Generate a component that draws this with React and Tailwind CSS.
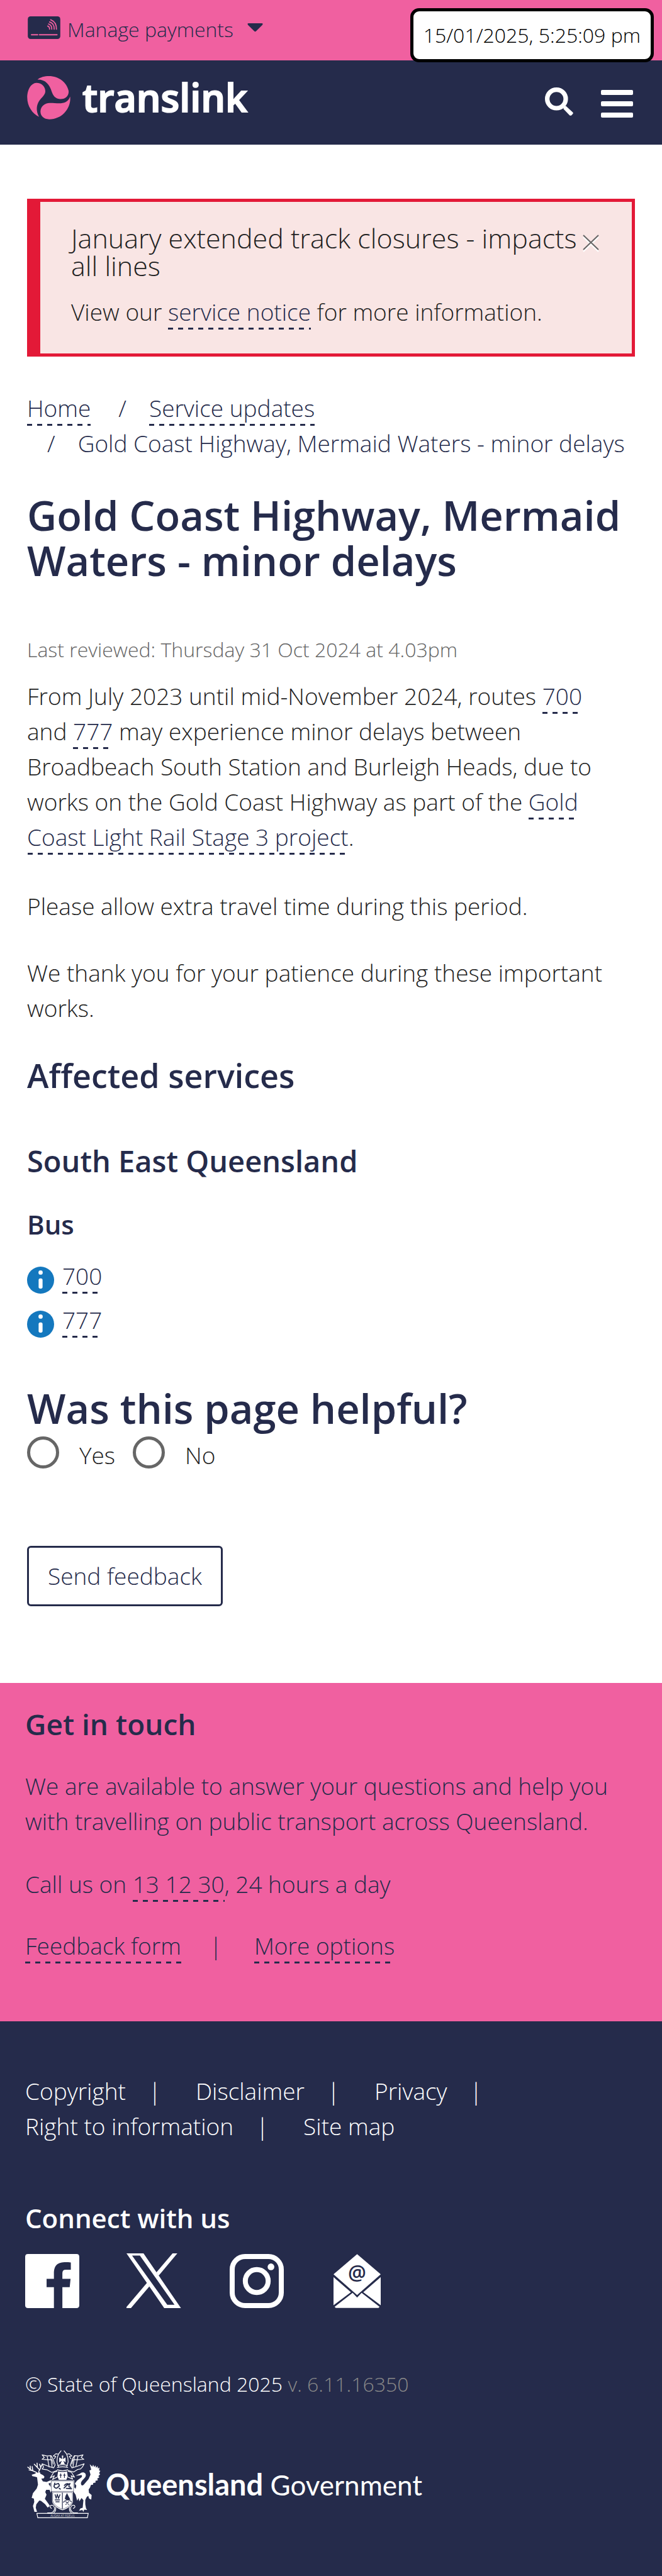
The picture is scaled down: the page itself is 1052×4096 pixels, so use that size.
import React from "react";

const LINK =
  "text-[#252b4b] pb-[3px] bg-no-repeat bg-bottom bg-[length:100%_3px] bg-[image:repeating-linear-gradient(90deg,#252b4b_0_8px,transparent_8px_16px)]";

function DashedLink({ children }) {
  return (
    <a href="#" className={LINK}>
      {children}
    </a>
  );
}

function CardIcon() {
  return (
    <svg viewBox="59 57 175 122" className="h-9 w-[52px]" aria-hidden="true">
      <rect x="59" y="57" width="175" height="122" rx="15" fill="#252b4b" />
      <g fill="none" stroke="#f060a0" strokeWidth="6" strokeLinecap="round">
        <path d="M182 75C204 84 214 102 213 126" />
        <path d="M176 87C192 92 202 107 201 126" />
        <path d="M171 98C182 102 189 112 188 126" />
        <path d="M166 109C173 112 177 118 176 126" />
        <path d="M79 156H112M122 156H216" strokeWidth="7" />
      </g>
    </svg>
  );
}

function SwirlLogo() {
  return (
    <svg viewBox="53 380 233 233" className="h-[69px] w-[69px]" aria-hidden="true">
      <g fill="#f060a0">
        <path d="M108 399C124 386 147 380 170 380C224 380 267 415 276 459C279 487 257 505 229 503C203 500 193 484 186 465C173 425 152 398 108 399Z" />
        <path d="M103 416C132 416 151 437 151 461C151 482 131 494 118 513C104 535 99 563 117 599C81 582 54 541 54 496C54 450 76 417 103 416Z" />
        <path d="M284 490C291 548 244 612 172 612C142 611 124 594 125 568C127 542 147 525 175 524C213 523 267 541 284 490Z" />
      </g>
    </svg>
  );
}

function SearchIcon() {
  return (
    <svg viewBox="751 462 150 150" className="h-[45px] w-[45px]" aria-hidden="true">
      <circle cx="812" cy="523" r="49" fill="none" stroke="#fff" strokeWidth="24" />
      <path d="M848 562L862 560L898 594Q902 598 898 603L891 610Q886 613 882 610L850 577Z" fill="#fff" />
    </svg>
  );
}

function InfoIcon() {
  return (
    <svg viewBox="0 0 48 48" className="h-[43px] w-[43px]" aria-hidden="true">
      <circle cx="24" cy="24" r="24" fill="#1478be" />
      <circle cx="24" cy="10.500" r="3.800" fill="#fff" />
      <rect x="20.500" y="21" width="7" height="18" rx="3" fill="#fff" />
    </svg>
  );
}

function FacebookIcon() {
  return (
    <svg viewBox="0 0 96 96" className="h-[86px] w-[86px]" aria-hidden="true">
      <path
        fill="#fff"
        d="M5 0H91Q96 0 96 5V91Q96 96 91 96H66V59H79L80.500 44H66V34Q66 28 72 28H81V15C60 13 51 17 51 35V44H38V59H51V96H5Q0 96 0 91V5Q0 0 5 0Z"
      />
    </svg>
  );
}

function XIcon() {
  return (
    <svg viewBox="0 0 98 98" className="h-[87px] w-[87px]" aria-hidden="true">
      <g fill="#fff">
        <path fillRule="evenodd" d="M0 0H30.500L97.500 98H67.500ZM10 4L73 92H86L24 4Z" />
        <path d="M82.500 0H91L57.500 40L53.500 34Z" />
        <path d="M0 98V96L37 52.500L41 59L8 98Z" />
      </g>
    </svg>
  );
}

function InstagramIcon() {
  return (
    <svg viewBox="0 0 97 97" className="h-[86px] w-[86px]" aria-hidden="true">
      <rect x="4.500" y="4.500" width="88" height="88" rx="23" fill="none" stroke="#fff" strokeWidth="9" />
      <circle cx="48.500" cy="48.500" r="20.500" fill="none" stroke="#fff" strokeWidth="9" />
      <circle cx="74" cy="23" r="6" fill="#fff" />
    </svg>
  );
}

function MailIcon() {
  return (
    <svg viewBox="0 0 84 96" className="h-[86px] w-[75px]" aria-hidden="true">
      <g fill="#fff">
        <path d="M42 0L84 36L42 73L0 36Z" />
        <path d="M0 41L31 68L0 91Z" />
        <path d="M84 41L53 68L84 91Z" />
        <path d="M34 69L42 77.500L50 69L82 94L80 96H4L2 94Z" />
      </g>
      <text x="42" y="46" textAnchor="middle" fontSize="36" fontWeight="600" fontFamily="Open Sans, sans-serif" fill="#252b4b">
        @
      </text>
    </svg>
  );
}

function CoatOfArms() {
  return (
    <svg viewBox="55 77 392 365" className="h-[108px] w-[117px]" aria-hidden="true">
      {/* stag */}
      <path
        fill="#fff"
        d="M78 209L97 203L104 196L112 199L123 195L124 203L141 212L147 220L143 228L130 230L138 244L158 248L180 238L183 250L168 257L184 280L181 306L174 290L156 290L151 302L158 316L149 338L168 364L176 376L164 385L150 367L128 349L119 347L103 368L100 386L107 408H93L85 377L92 355L90 337L78 333L85 308L105 283L112 262L107 222L95 219L82 216Z"
      />
      <g fill="none" stroke="#fff" strokeWidth="5" strokeLinecap="round" strokeLinejoin="round">
        <path d="M108 200C98 188 82 192 72 180L57 168M72 180L70 162M84 187L81 165M86 188L64 183" />
        <path d="M116 198C114 182 128 182 126 166L120 152M120 182L104 165L92 152M109 170L107 146M126 172L132 156" />
      </g>
      {/* brolga */}
      <path
        fill="#fff"
        d="M314 214L338 203C346 191 370 194 369 212C368 228 346 236 343 252C341 266 350 270 358 262L384 232L394 208L388 186L398 182L390 152L404 166L408 154L414 168L420 158L424 172L432 162L434 176L442 170L440 186L447 188L440 200L446 206L436 216L442 222L430 230L434 238L420 242L422 250L408 254L408 262L396 264L392 276L384 288L386 306L400 318L398 342L386 336L382 322L374 328L366 344V368L370 390L376 398L360 396L356 408L350 398L332 402L340 390L352 386L356 346L346 334L334 352L330 334L322 348L314 316L303 300L306 276L314 284L318 268L310 256L322 240L346 222C352 214 346 208 338 212Z"
      />
      {/* crest and mantling */}
      <g fill="none" stroke="#fff" strokeWidth="4" strokeLinecap="round" strokeLinejoin="round">
        <path d="M236 80L222 98L216 116L214 140L222 166M222 98L208 96L194 108L208 110L200 122" />
        <path d="M252 80L266 98L272 116L274 140L266 166M266 98L280 96L294 108L280 110L288 122" />
        <path d="M194 152L188 128L164 128L134 126L146 116L134 102L160 108L182 106L192 122L204 156L196 172L170 164L134 150L142 168L134 178L160 182L186 196L214 186" />
        <path d="M294 152L300 128L324 128L358 126L344 116L354 102L330 108L308 106L298 122L286 156L294 172L320 164L360 150L350 168L340 178L326 180L304 194L274 186" />
        <path d="M162 112L172 168M180 110L188 166M326 112L316 164M308 110L300 166" />
        <path d="M214 190L196 196L178 226L200 214L190 234L214 222M274 190L292 196L308 222L290 214L298 232L274 222" />
        <path d="M218 160Q244 148 270 160M216 170Q244 162 272 170M216 182Q244 192 272 182" />
      </g>
      <path fill="#fff" d="M240 106H248L246 124L260 116V142L248 134L256 152H232L240 134L226 142V116L242 124Z" />
      <path fill="#fff" d="M220 190Q244 198 268 190L272 218L264 236H224L216 218Z" />
      <path d="M234 202V226M228 211H240M254 202V226M248 211H260" stroke="#252b4b" strokeWidth="4" />
      {/* shield */}
      <path fill="#fff" d="M180 238H307V298H300V352C296 374 270 392 244 400C218 392 192 374 188 352V298H180Z" />
      <g fill="none" stroke="#252b4b" strokeWidth="2">
        <path d="M184 242H303V298H184ZM191 304H297V350C292 370 268 386 244 394C220 386 196 370 191 350Z" />
        <path d="M243 304V393" strokeWidth="4" />
      </g>
      <g fill="none" stroke="#252b4b" strokeWidth="6" strokeLinecap="round" strokeLinejoin="round">
        <path d="M202 254L198 272Q208 288 218 276Q232 270 222 256L202 262M226 282L232 286" />
        <path d="M252 280L268 264L284 256Q270 276 288 276M254 266Q264 254 276 258M264 282L292 284" />
        <path d="M204 316L210 336L216 314L222 336L230 316M204 344H228M208 354H226" strokeWidth="5" />
      </g>
      <path fill="#252b4b" d="M256 338L260 322L268 308L276 324L286 342L268 346Z" />
      <path d="M248 358Q268 332 292 354M260 352L278 370M278 352L260 370" fill="none" stroke="#252b4b" strokeWidth="4" />
      {/* scroll and motto */}
      <g fill="none" stroke="#fff" strokeWidth="4">
        <path d="M186 390Q172 384 180 374Q194 368 200 384Q206 402 184 414L162 414M206 382Q212 402 196 414" />
        <path d="M300 390Q316 384 308 374Q294 368 288 384Q282 402 304 414L326 414M282 382Q276 402 292 414" />
        <path d="M106 416H382L377 440H111Z" />
      </g>
      <text x="244" y="434" textAnchor="middle" fontSize="16" fontFamily="Open Sans, sans-serif" fill="#fff">
        AUDAX AT FIDELIS
      </text>
    </svg>
  );
}

function Pipe() {
  return <span aria-hidden="true">|</span>;
}

function Header() {
  return (
    <header>
      <div className="relative flex h-24 items-start bg-[#f060a0] px-11">
        <button type="button" className="mt-[23px] flex items-start text-[32px] leading-[48px] font-light text-[#252b4b]">
          <span className="mt-[3px]">
            <CardIcon />
          </span>
          <span className="ml-[11px]">Manage payments</span>
          <svg viewBox="0 0 28 16" className="mt-[14px] ml-[22px] h-[14px] w-[25px]" aria-hidden="true">
            <path d="M2 0H26Q29 0 27 3L16 14Q14 16 12 14L1 3Q-1 0 2 0Z" fill="#252b4b" />
          </svg>
        </button>
        <time className="absolute top-[13px] right-[13px] flex h-[86px] items-center rounded-[14px] border-[5px] border-black bg-white px-4 text-[32px] font-light text-black">
          15/01/2025, 5:25:09 pm
        </time>
      </div>
      <div className="flex h-[134px] items-center justify-between bg-[#252b4b] pr-[46px] pl-[43px]">
        <a href="#" className="-mt-4 flex items-center gap-[19px]" aria-label="translink home">
          <SwirlLogo />
          <span className="text-[61px] leading-[72px] font-semibold text-white [-webkit-text-stroke:2px_white]">translink</span>
        </a>
        <div className="flex items-start gap-11">
          <button type="button" aria-label="Search">
            <SearchIcon />
          </button>
          <button type="button" aria-label="Menu" className="flex w-[51px] flex-col gap-[10px] pt-1">
            <span className="h-2 w-full rounded-xs bg-white" />
            <span className="h-2 w-full rounded-xs bg-white" />
            <span className="h-2 w-full rounded-xs bg-white" />
          </button>
        </div>
      </div>
    </header>
  );
}

function Alert() {
  return (
    <section className="mt-[86px] flex items-start justify-between border-5 border-l-[21px] border-[#e31937] bg-[#f9e5e4] pt-9 pr-[52px] pb-[38px] pl-[49px]">
      <div>
        <h2 className="text-[43px] leading-[44px]">January extended track closures - impacts all lines</h2>
        <p className="mt-[23px]">
          View our <DashedLink>service notice</DashedLink> for more information.
        </p>
      </div>
      <button type="button" aria-label="Close" className="mt-4 shrink-0">
        <svg viewBox="0 0 26 28" className="h-7 w-[26px]" fill="none" strokeWidth="2" aria-hidden="true">
          <path d="M1 4L25 27M25 4L1 27" stroke="#fff" />
          <path d="M1 1L25 24M25 1L1 24" stroke="#666" />
        </svg>
      </button>
    </section>
  );
}

function Breadcrumb() {
  return (
    <nav aria-label="Breadcrumb" className="mt-[54px] text-[#252b4b]">
      <ol className="flex flex-wrap">
        <li className="mr-3">
          <DashedLink>Home</DashedLink>
        </li>
        <li className="ml-8 flex">
          <span className="mr-9">/</span>
          <span>
            <DashedLink>Service updates</DashedLink>
          </span>
        </li>
        <li className="ml-8 flex">
          <span className="mr-9">/</span>
          <span>Gold Coast Highway, Mermaid Waters - minor delays</span>
        </li>
      </ol>
    </nav>
  );
}

function HelpfulForm() {
  return (
    <form className="pt-[76px]">
      <fieldset>
        <legend className="text-[65px] leading-[72px] font-semibold text-[#252b4b]">Was this page helpful?</legend>
        <div className="mt-[9px] flex items-start gap-7">
          {["Yes", "No"].map((answer) => (
            <label key={answer} className="flex items-start gap-8 leading-[60px]">
              <input type="radio" name="helpful" value={answer} className="h-[51px] w-[51px] appearance-none rounded-full border-[5px] border-[#666]" />
              {answer}
            </label>
          ))}
        </div>
      </fieldset>
      <button type="button" className="mt-[114px] h-24 rounded-md border-[3px] border-[#252b4b] px-[30px] font-light text-[#252b4b]">
        Send feedback
      </button>
    </form>
  );
}

function Contact() {
  return (
    <section className="mt-[122px] bg-[#f060a0] px-10 pt-[37px] pb-[92px] text-[#252b4b]">
      <h2 className="text-[46px] leading-[56px] font-semibold">Get in touch</h2>
      <p className="mt-[43px]">
        We are available to answer your questions and help you with travelling on public transport across Queensland.
      </p>
      <p className="mt-11">
        Call us on <DashedLink>13 12 30</DashedLink>, 24 hours a day
      </p>
      <p className="mt-[42px] flex">
        <span>
          <DashedLink>Feedback form</DashedLink>
        </span>
        <span className="mr-[51px] ml-[45px]">
          <Pipe />
        </span>
        <span>
          <DashedLink>More options</DashedLink>
        </span>
      </p>
    </section>
  );
}

const FOOTER_LINKS = ["Copyright", "Disclaimer", "Privacy", "Right to information", "Site map"];

function Footer() {
  return (
    <footer className="bg-[#252b4b] px-10 pt-[83px] pb-[92px] text-white">
      <ul className="flex max-w-[880px] flex-wrap">
        {FOOTER_LINKS.map((label, i) => (
          <li key={label} className="mr-[55px] flex gap-9">
            <a href="#">{label}</a>
            {i < FOOTER_LINKS.length - 1 && <Pipe />}
          </li>
        ))}
      </ul>
      <h2 className="mt-[92px] text-[42px] leading-[52px] font-semibold">Connect with us</h2>
      <div className="mt-[30px] flex items-center">
        <a href="#" aria-label="Facebook">
          <FacebookIcon />
        </a>
        <a href="#" aria-label="X" className="ml-[75px]">
          <XIcon />
        </a>
        <a href="#" aria-label="Instagram" className="ml-[77px]">
          <InstagramIcon />
        </a>
        <a href="#" aria-label="Email" className="ml-[79px]">
          <MailIcon />
        </a>
      </div>
      <p className="mt-[97px] text-[32px] leading-[48px]">
        © State of Queensland 2025 <span className="text-[#888]">v. 6.11.16350</span>
      </p>
      <a href="#" className="mt-[81px] flex items-center gap-2 pl-[3px]">
        <CoatOfArms />
        <span className="font-['Lato',sans-serif] text-[44px] leading-[60px] font-normal">
          <strong className="text-[47px] font-bold">Queensland</strong> Government
        </span>
      </a>
    </footer>
  );
}

export default function App() {
  return (
    <div className="bg-white font-['Open_Sans',sans-serif] text-[37px] leading-[56px] font-light text-[#222]">
      <Header />
      <main className="px-[43px]">
        <Alert />
        <Breadcrumb />
        <h1 className="mt-[50px] text-[65px] leading-[72px] font-semibold text-[#252b4b]">
          Gold Coast Highway, Mermaid Waters - minor delays
        </h1>
        <p className="mt-[82px] text-[32px] leading-[48px] text-[#666]">Last reviewed: Thursday 31 Oct 2024 at 4.03pm</p>
        <p className="mt-[22px] pr-4">
          From July 2023 until mid-November 2024, routes <DashedLink>700</DashedLink> and <DashedLink>777</DashedLink> may
          experience minor delays between Broadbeach South Station and Burleigh Heads, due to works on the Gold Coast Highway
          as part of the <DashedLink>Gold Coast Light Rail Stage 3 project</DashedLink>.
        </p>
        <p className="mt-[54px]">Please allow extra travel time during this period.</p>
        <p className="mt-[50px]">We thank you for your patience during these important works.</p>
        <h2 className="mt-[47px] text-[52px] leading-[64px] font-semibold text-[#252b4b]">Affected services</h2>
        <h3 className="mt-[76px] text-[47px] leading-[56px] font-semibold text-[#252b4b]">South East Queensland</h3>
        <h4 className="mt-[47px] text-[42px] leading-[52px] font-semibold text-[#252b4b]">Bus</h4>
        <ul className="mt-7 flex flex-col gap-[14px]">
          {["700", "777"].map((route) => (
            <li key={route} className="flex items-end gap-[13px]">
              <InfoIcon />
              <span>
                <DashedLink>{route}</DashedLink>
              </span>
            </li>
          ))}
        </ul>
        <HelpfulForm />
      </main>
      <Contact />
      <Footer />
    </div>
  );
}
